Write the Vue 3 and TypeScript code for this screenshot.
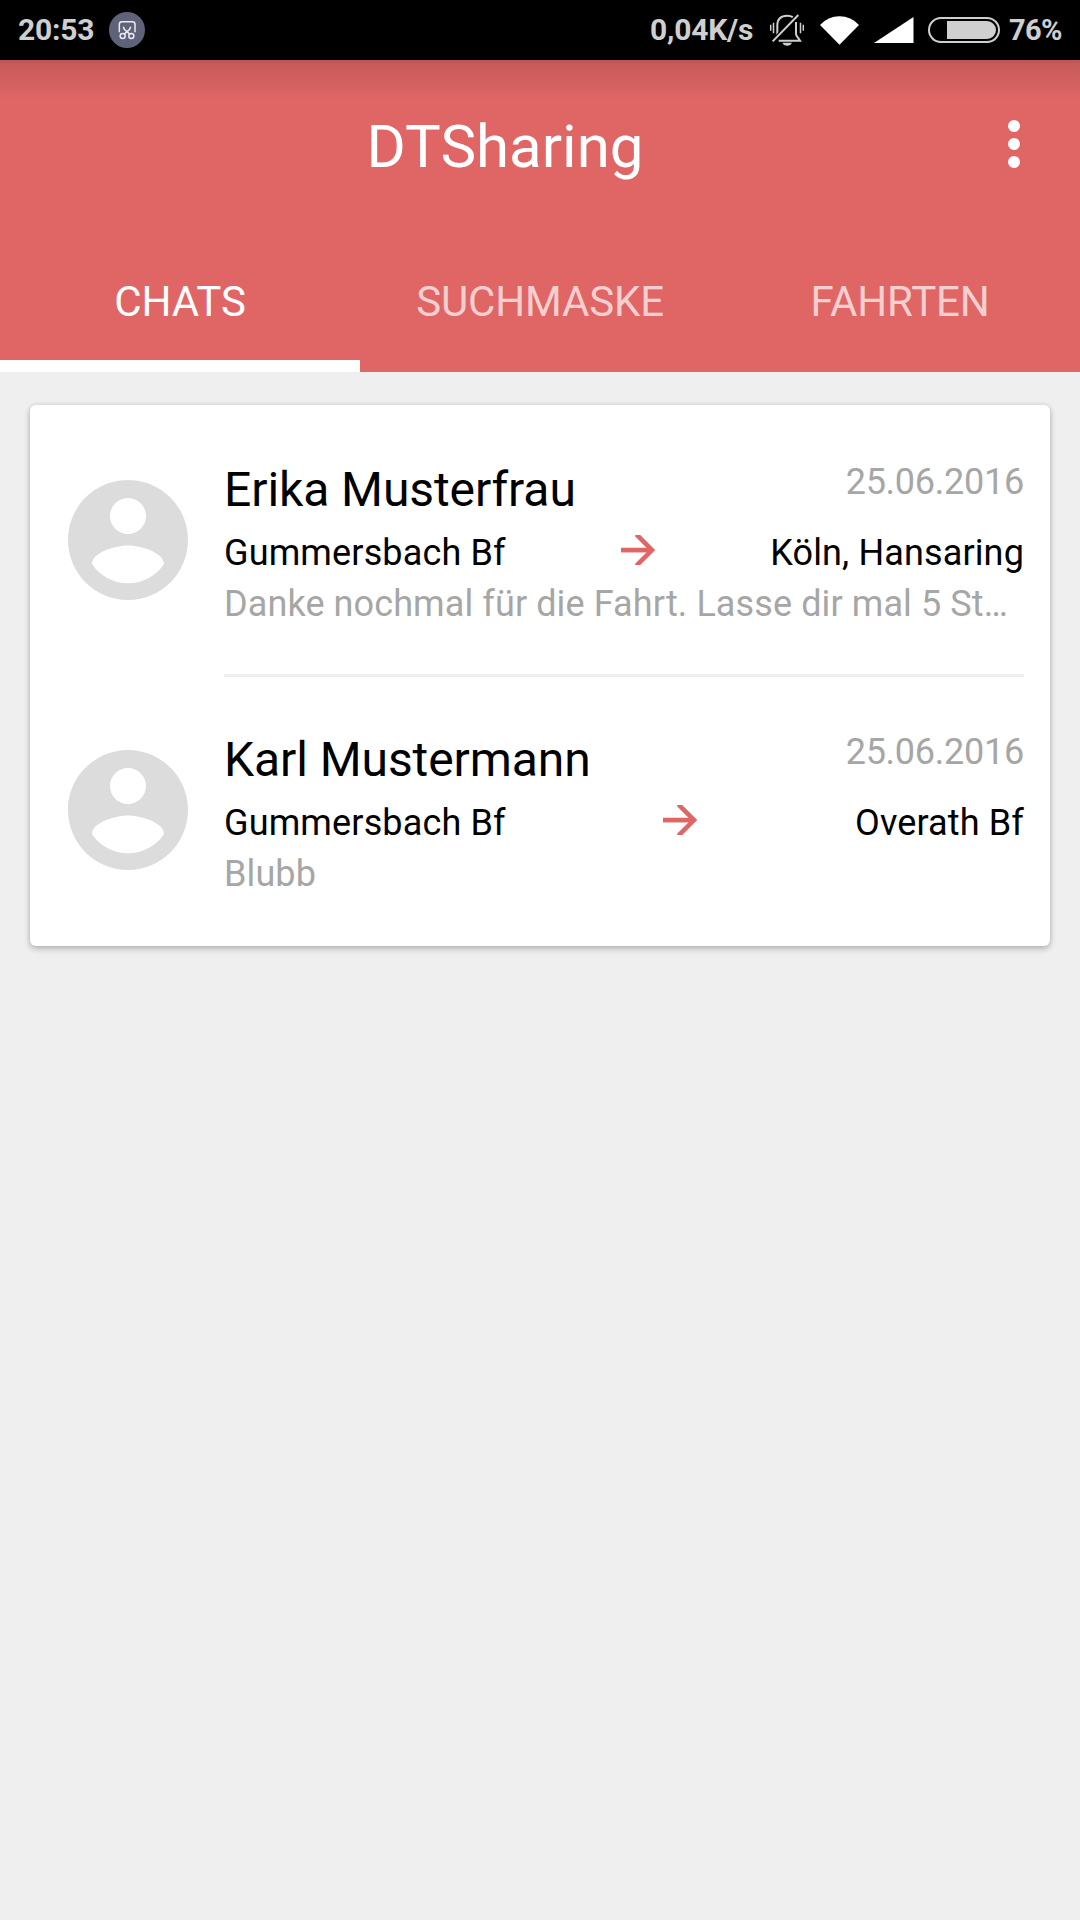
<script setup lang="ts">
interface Chat {
  name: string
  date: string
  from: string
  to: string
  message: string
}

const tabs: string[] = ['CHATS', 'SUCHMASKE', 'FAHRTEN']
const activeTab = 'CHATS'

const chats: Chat[] = [
  {
    name: 'Erika Musterfrau',
    date: '25.06.2016',
    from: 'Gummersbach Bf',
    to: 'Köln, Hansaring',
    message: 'Danke nochmal für die Fahrt. Lasse dir mal 5 St…',
  },
  {
    name: 'Karl Mustermann',
    date: '25.06.2016',
    from: 'Gummersbach Bf',
    to: 'Overath Bf',
    message: 'Blubb',
  },
]
</script>

<template>
  <div class="screen">
    <div class="status">
      <span class="clock">20:53</span>
      <svg class="snip" viewBox="327 36 108 108">
        <circle cx="381" cy="90" r="54" fill="#5f6379" />
        <g fill="none" stroke="#ececf0" stroke-width="4.5">
          <path d="M358 97V73q0-8 8-8h31q8 0 8 8v24" />
          <circle cx="368" cy="108" r="7.5" />
          <circle cx="394" cy="108" r="7.5" />
          <path d="M370 80l3 8 17 15M392 80l-3 8-17 15" />
        </g>
      </svg>
      <span class="spacer"></span>
      <span class="speed">0,04K/s</span>
      <svg class="bell" viewBox="390 40 102 96">
        <g fill="none" stroke="#cfcfcf">
          <path d="M412 104V74q0-29 30-29q10 0 17 5" stroke-width="6" />
          <path d="M468 64v35q0 6 6 12l6 9H416" stroke-width="6" />
          <path d="M399 122L475 43" stroke="#000" stroke-width="14" />
          <path d="M398 122L475 43" stroke-width="6" />
          <path d="M392 72v18M400.500 66v32M481.500 66v32M490 72v18" stroke-width="4.5" />
        </g>
        <path d="M427 126h29q-4 9-14.500 9t-14.500-9z" fill="#cfcfcf" />
      </svg>
      <svg class="wifi" viewBox="0 0 39 29">
        <path d="M0 9Q8 .3 19.500 .3T39 9L19.500 28.700z" fill="#fff" />
      </svg>
      <svg class="signal" viewBox="0 0 40 26">
        <path d="M0 26L39.500 0V26z" fill="#fff" />
      </svg>
      <svg class="battery" viewBox="0 0 72 26">
        <rect x="1" y="1" width="70" height="24" rx="12" fill="none" stroke="#cfcfcf" stroke-width="2" />
        <path d="M19 4H59a9 9 0 0 1 0 18H19z" fill="#cfcfcf" />
      </svg>
      <span class="percent">76%</span>
    </div>

    <header class="header">
      <div class="toolbar">
        <h1 class="title">DTSharing</h1>
        <svg class="more" viewBox="0 0 12 48">
          <circle cx="6" cy="6" r="6" />
          <circle cx="6" cy="24" r="6" />
          <circle cx="6" cy="42" r="6" />
        </svg>
      </div>
      <nav class="tabs">
        <div v-for="tab in tabs" :key="tab" class="tab" :class="{ active: tab === activeTab }">
          {{ tab }}
        </div>
      </nav>
    </header>

    <main class="card">
      <article v-for="chat in chats" :key="chat.name" class="chat">
        <svg class="avatar" viewBox="2 2 20 20">
          <path
            d="M12 2C6.480 2 2 6.480 2 12s4.480 10 10 10 10-4.480 10-10S17.520 2 12 2zm0 3c1.660 0 3 1.340 3 3s-1.340 3-3 3-3-1.340-3-3 1.340-3 3-3zm0 14.200c-2.500 0-4.710-1.280-6-3.220.030-1.990 4-3.080 6-3.080 1.990 0 5.970 1.090 6 3.080-1.290 1.940-3.500 3.220-6 3.220z"
            fill="#dcdcdc"
          />
        </svg>
        <div class="body">
          <div class="head">
            <span class="name">{{ chat.name }}</span>
            <span class="date">{{ chat.date }}</span>
          </div>
          <div class="route">
            <span>{{ chat.from }}</span>
            <svg class="arrow" viewBox="4 5 16 14">
              <path d="M12 4l-1.410 1.410L16.170 11H4v2h12.170l-5.580 5.590L12 20l8-8z" fill="#e06666" stroke="#e06666" stroke-width="0.2" />
            </svg>
            <span>{{ chat.to }}</span>
          </div>
          <div class="message">{{ chat.message }}</div>
        </div>
      </article>
    </main>
  </div>
</template>

<style>
body {
  background: #efefef;
}
</style>

<style scoped>
.screen {
  width: 1080px;
  height: 1920px;
  overflow: hidden;
  background: #efefef;
  font-family: Roboto, 'Liberation Sans', sans-serif;
}

.status {
  display: flex;
  align-items: center;
  height: 60px;
  padding: 0 19px 0 18px;
  box-sizing: border-box;
  background: #000;
  color: #cfcfcf;
  font-size: 30px;
  font-weight: 700;
  line-height: 62px;
  letter-spacing: -0.2px;
  white-space: nowrap;
}
.status svg {
  flex: none;
}
.clock {
  width: 91px;
}
.snip {
  width: 36px;
  height: 36px;
}
.spacer {
  flex: 1;
}
.speed {
  width: 120px;
}
.bell {
  width: 34px;
  height: 32px;
  margin-right: 16px;
}
.wifi {
  width: 39px;
  height: 29px;
  margin-right: 15px;
}
.signal {
  width: 40px;
  height: 26px;
  margin-right: 14px;
}
.battery {
  width: 72px;
  height: 26px;
  margin-right: 9px;
}
.percent {
  width: 52px;
  font-size: 29px;
  letter-spacing: -0.6px;
}

.header {
  height: 312px;
  background:
    linear-gradient(rgba(0, 0, 0, 0.04), rgba(0, 0, 0, 0.04)) 0 0 / 100% 3px no-repeat,
    linear-gradient(rgba(0, 0, 0, 0.12), rgba(0, 0, 0, 0)) 0 0 / 100% 42px no-repeat,
    #e06666;
  color: #fff;
}
.toolbar {
  display: flex;
  align-items: center;
  justify-content: flex-end;
  height: 168px;
  padding-right: 60px;
}
.title {
  flex: 1;
  margin: 0;
  padding: 6px 0 0 2px;
  font-size: 60px;
  font-weight: 400;
  line-height: 70px;
  text-align: center;
}
.more {
  width: 12px;
  height: 48px;
  fill: #fff;
}
.tabs {
  display: flex;
  height: 144px;
}
.tab {
  flex: 1;
  box-sizing: border-box;
  border-bottom: 12px solid transparent;
  padding-top: 49px;
  font-size: 42px;
  line-height: 50px;
  letter-spacing: -0.15px;
  text-align: center;
  color: rgba(255, 255, 255, 0.7);
}
.tab.active {
  color: #fff;
  border-bottom-color: #fff;
}

.card {
  margin: 33px 30px 0;
  height: 541px;
  border-radius: 6px;
  background: #fff;
  box-shadow:
    0 3px 6px rgba(0, 0, 0, 0.22),
    0 0 5px rgba(0, 0, 0, 0.1);
}
.chat {
  display: flex;
  height: 270px;
  padding: 0 26px 0 38px;
}
.avatar {
  flex: none;
  width: 120px;
  height: 120px;
  margin: 75px 36px 0 0;
}
.body {
  flex: 1;
  min-width: 0;
  height: 272px;
  box-sizing: border-box;
  padding-top: 56px;
  border-bottom: 3px solid #efefef;
  font-size: 36px;
  line-height: 42px;
  white-space: nowrap;
  color: #000;
}
.chat:last-child .body {
  border-bottom: 0;
}
.head {
  display: flex;
  justify-content: space-between;
  align-items: flex-start;
  height: 56px;
}
.name {
  font-size: 48px;
  line-height: 58px;
  letter-spacing: -0.08px;
}
.date {
  letter-spacing: -0.25px;
  color: #a6a6a6;
}
.route {
  display: flex;
  justify-content: space-between;
  align-items: center;
  margin-top: 15px;
  letter-spacing: 0.14px;
}
.arrow {
  width: 34px;
  height: 30px;
  margin-top: -6px;
}
.message {
  margin-top: 9px;
  overflow: hidden;
  text-overflow: ellipsis;
  letter-spacing: 0.1px;
  color: #a6a6a6;
}
</style>
